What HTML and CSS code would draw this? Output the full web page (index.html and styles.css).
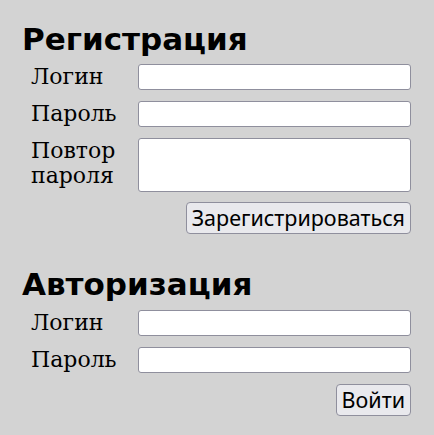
FILE: index.html
```html
<!DOCTYPE html>
<html lang="ru">
<head>
<meta charset="utf-8">
<title>Регистрация</title>
<link rel="stylesheet" href="styles.css">
</head>
<body>
<main class="page">
  <section class="block">
    <h2 class="title">Регистрация</h2>
    <form class="form">
      <label class="label" for="r-login">Логин</label>
      <input class="field" id="r-login" type="text">
      <label class="label" for="r-pass">Пароль</label>
      <input class="field" id="r-pass" type="password">
      <label class="label" for="r-pass2">Повтор пароля</label>
      <textarea class="field area" id="r-pass2"></textarea>
      <div class="actions tight"><button class="btn" type="button">Зарегистрироваться</button></div>
    </form>
  </section>
  <section class="block second">
    <h2 class="title">Авторизация</h2>
    <form class="form">
      <label class="label" for="a-login">Логин</label>
      <input class="field" id="a-login" type="text">
      <label class="label" for="a-pass">Пароль</label>
      <input class="field" id="a-pass" type="password">
      <div class="actions"><button class="btn" type="button">Войти</button></div>
    </form>
  </section>
</main>
</body>
</html>
```
FILE: styles.css
```css
html, body {
  margin: 0;
  padding: 0;
  background: #d3d3d3;
}
body {
  font-family: "DejaVu Serif", serif;
  color: #000;
}
.page {
  padding: 21px 23px 0 22px;
}
.title {
  margin: 0;
  font-family: "DejaVu Sans", sans-serif;
  font-weight: bold;
  font-size: 31px;
  line-height: 36px;
}
.second {
  margin-top: 32px;
}
.form {
  display: grid;
  grid-template-columns: 107px 273px;
  row-gap: 11px;
  margin: 7px 0 0 9px;
  align-items: start;
}
.second .form {
  margin-top: 8px;
}
.label {
  font-size: 22px;
  line-height: 25px;
  padding-top: 0;
  width: 95px;
}
.field {
  box-sizing: border-box;
  width: 273px;
  height: 26px;
  margin: 0;
  border: 1px solid #8f8f9d;
  border-radius: 3px;
  background: #fff;
  font: inherit;
  font-size: 16px;
  padding: 0 4px;
}
.area {
  height: 54px;
  resize: none;
}
.actions {
  grid-column: 1 / 3;
  display: flex;
  justify-content: flex-end;
}
.tight {
  margin-top: -1px;
}
.btn {
  box-sizing: border-box;
  height: 32px;
  margin: 0;
  padding: 0 5px;
  border: 1px solid #8f8f9d;
  border-radius: 4px;
  background: #e9e9ed;
  font-family: "Noto Sans", sans-serif;
  font-size: 21.5px;
  line-height: 30px;
  color: #000;
}
```
